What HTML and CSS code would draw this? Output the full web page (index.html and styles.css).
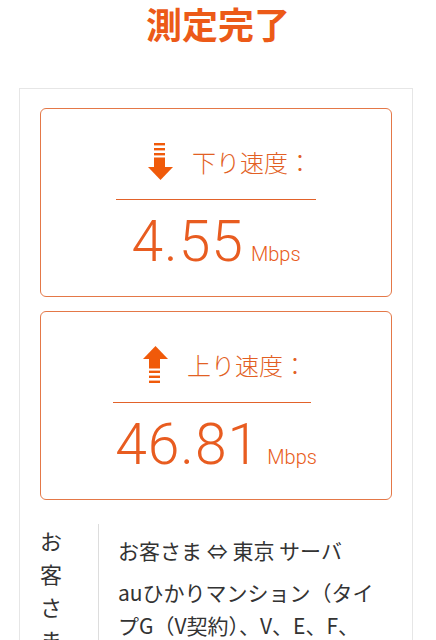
FILE: index.html
```html
<!DOCTYPE html>
<html lang="ja">
<head>
  <meta charset="UTF-8">
  <meta name="viewport" content="width=device-width, initial-scale=1.0">
  <title>測定完了</title>
  <link rel="stylesheet" href="styles.css">
</head>
<body>
  <h1 class="title">測定完了</h1>

  <div class="result">
    <!-- 下り -->
    <div class="speed-box">
      <div class="speed-head">
        <svg class="speed-icon" width="25" height="37" viewBox="0 0 25 37">
          <rect x="6" y="0" width="11" height="2.4"/>
          <rect x="6" y="5" width="11" height="2.4"/>
          <rect x="6" y="10" width="11" height="2.4"/>
          <rect x="6" y="14.5" width="11" height="10"/>
          <polygon points="0,24 25,24 12.5,37"/>
        </svg>
        <span class="speed-label">下り速度：</span>
      </div>
      <div class="speed-value"><span class="speed-num">4.55</span><span class="speed-unit">Mbps</span></div>
    </div>

    <!-- 上り -->
    <div class="speed-box">
      <div class="speed-head up">
        <svg class="speed-icon" width="25" height="37" viewBox="0 0 25 37">
          <polygon points="12.5,0 25,13 0,13"/>
          <rect x="6" y="12.5" width="11" height="10"/>
          <rect x="6" y="24.6" width="11" height="2.4"/>
          <rect x="6" y="29.6" width="11" height="2.4"/>
          <rect x="6" y="34.6" width="11" height="2.4"/>
        </svg>
        <span class="speed-label">上り速度：</span>
      </div>
      <div class="speed-value"><span class="speed-num">46.81</span><span class="speed-unit">Mbps</span></div>
    </div>

    <div class="route">
      <div class="route-th">お客さまの回線</div>
      <div class="route-td">
        <p>お客さま ⇔ 東京 サーバ</p>
        <p>auひかりマンション（タイプG（V契約）、V、E、F、都市機構、ギガ）</p>
      </div>
    </div>
  </div>
</body>
</html>
```

FILE: styles.css
```css
body {
  margin: 0;
  padding: 0;
  background: #fff;
  color: #333;
  font-family: "Noto Sans CJK JP", sans-serif;
}
.title {
  margin: 0 0 44px 0;
  padding-top: 2px;
  font-size: 36px;
  line-height: 42px;
  font-weight: bold;
  color: #ec5a18;
  text-align: center;
}
.result {
  width: 352px;
  margin: 0 0 0 19px;
  padding: 19px 20px 20px 20px;
  border: 1px solid #e6e6e6;
  border-bottom: none;
}
.speed-box {
  border: 1px solid #e47848;
  border-radius: 6px;
  margin-bottom: 14px;
}
.speed-head {
  display: flex;
  align-items: center;
  width: 168px;
  margin: 0 auto;
  padding: 34px 0 19px 32px;
  border-bottom: 1px solid #e2622a;
}
.speed-head.up {
  padding-left: 30px;
  margin-left: 72px;
}
.speed-icon {
  fill: #f05a0a;
  flex-shrink: 0;
}
.speed-label {
  margin-left: 19px;
  font-size: 24px;
  font-weight: 300;
  color: #e25f24;
}
.speed-value {
  margin-top: 14px;
  padding-bottom: 26px;
  text-align: center;
  color: #e85c20;
  font-family: Roboto, "Liberation Sans", sans-serif;
  font-weight: 300;
  font-size: 56px;
  line-height: 56px;
}
.speed-num {
  font-size: 57px;
  letter-spacing: 1px;
}
.speed-unit {
  margin-left: 7px;
  font-size: 20px;
  line-height: 1;
}
.route {
  display: flex;
  margin-top: 24px;
}
.route-th {
  width: 22px;
  padding-right: 36px;
  border-right: 1px solid #ddd;
  font-size: 22px;
  line-height: 33px;
  color: #333;
}
.route-td {
  flex: 1;
  padding: 10px 12px 0 19px;
  font-size: 21px;
  line-height: 33px;
  color: #333;
}
.route-td p {
  margin: 0 0 9px 0;
}
```
